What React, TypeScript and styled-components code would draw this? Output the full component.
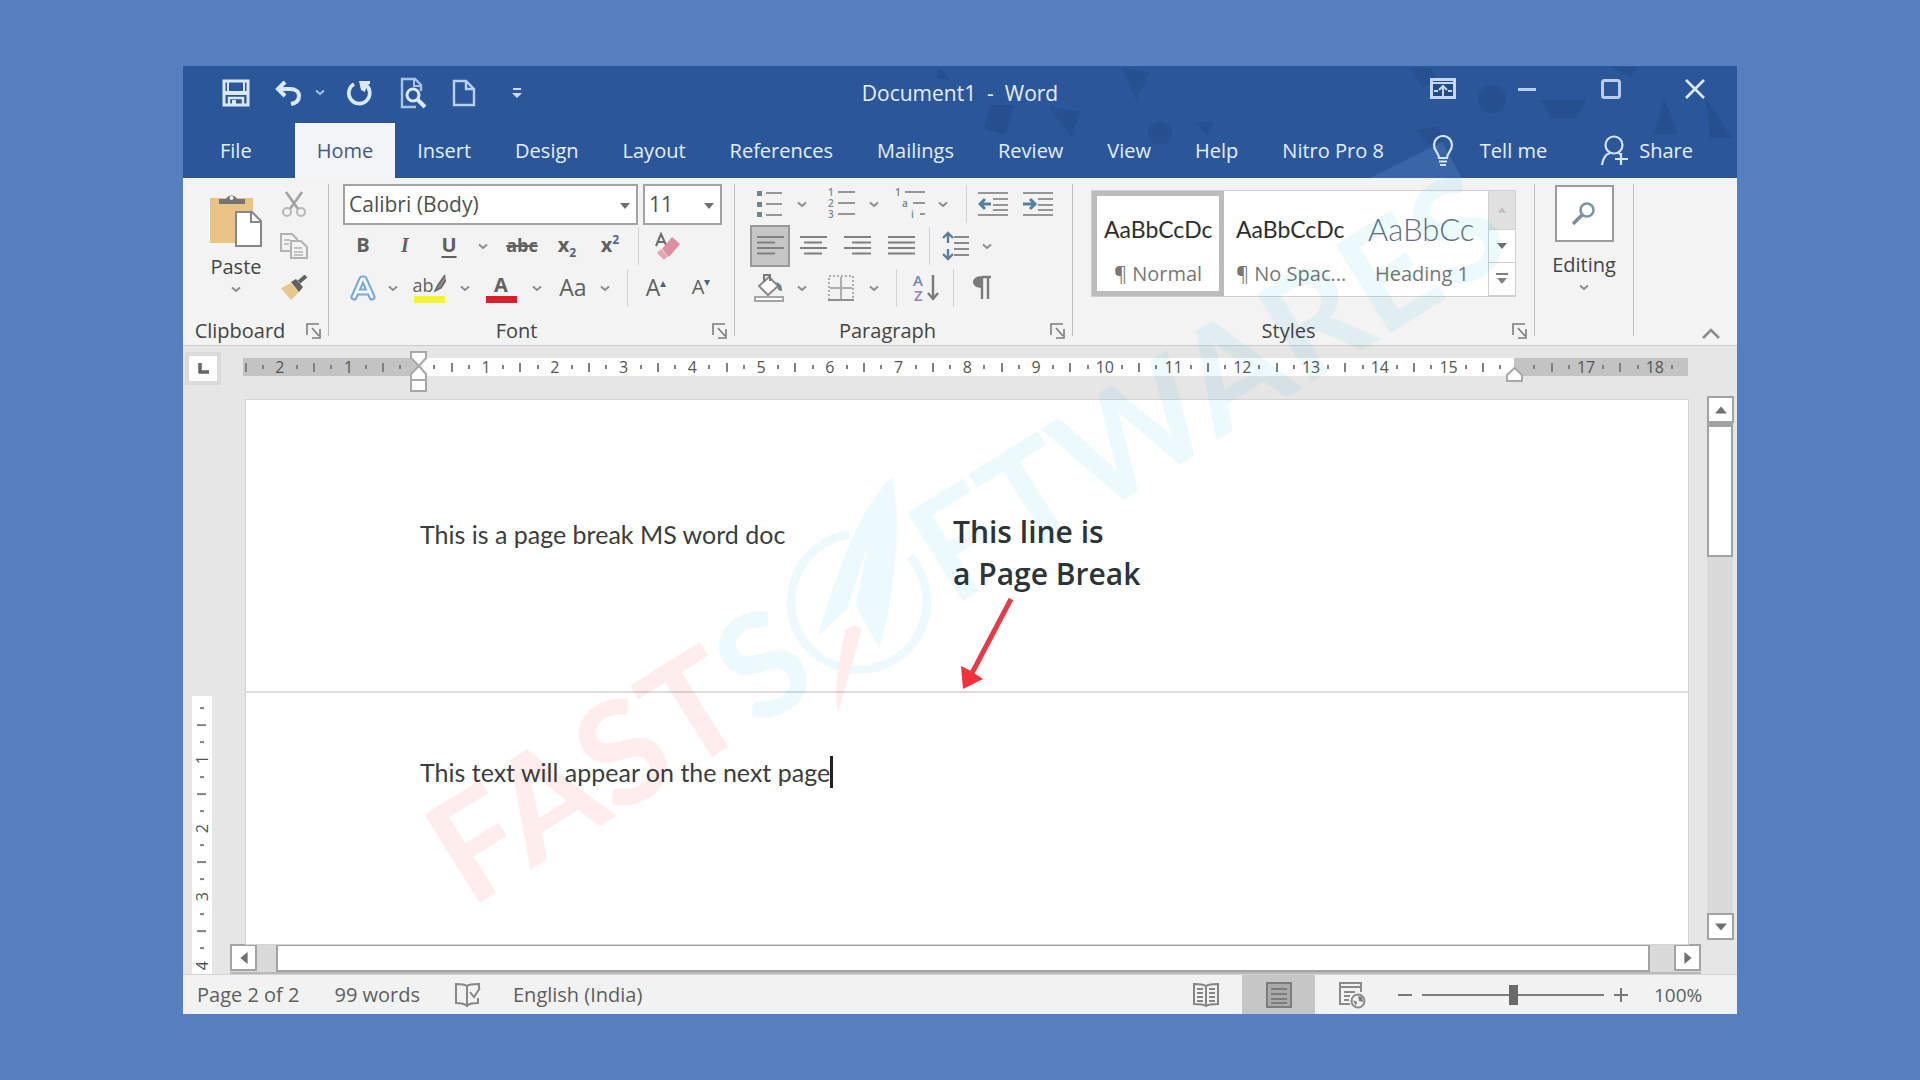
import React from 'react';
import styled, { createGlobalStyle, css } from 'styled-components';

const UI_FONT = '"Open Sans", "Noto Sans", sans-serif';
const DOC_FONT = 'Lato, "Open Sans", sans-serif';

const GlobalStyle = createGlobalStyle`
  * { box-sizing: border-box; }
  body { margin: 0; background: #557fbe; font-family: ${UI_FONT}; color: #444; }
  button, select, input { font: inherit; color: inherit; }
  svg { display: block; flex: none; }
`;

/* ---------- shell ---------- */

const Desktop = styled.div`
  min-height: 100vh;
  padding: 66px 183px;
  display: flex;
`;

const AppWindow = styled.div`
  position: relative;
  flex: 1;
  min-width: 0;
  display: flex;
  flex-direction: column;
  overflow: hidden;
  background: #e6e6e6;
  font-size: 20px;
`;

const Header = styled.header`
  position: relative;
  background: #2b579a;
  color: #e4eefb;
`;

const HeaderArt = styled.svg`
  position: absolute;
  right: 0;
  top: 0;
`;

const TitleBar = styled.div`
  position: relative;
  height: 57px;
  padding-bottom: 4px;
  display: grid;
  grid-template-columns: 1fr auto 1fr;
`;

const QuickAccess = styled.div`
  display: flex;
  align-items: center;
  padding-left: 27px;
`;

const Title = styled.h1`
  margin: 0;
  align-self: center;
  font-size: 21px;
  line-height: 28px;
  font-weight: 400;
  white-space: pre;
`;

const WindowControls = styled.div`
  display: flex;
  justify-content: flex-end;
  height: 46px;
`;

const IconButton = styled.button<{ $w: number; $active?: boolean }>`
  width: ${p => p.$w}px;
  height: 100%;
  flex: none;
  padding: 0;
  border: ${p => (p.$active ? '2px solid #9a9a9a' : '0')};
  background: ${p => (p.$active ? '#c6c6c6' : 'transparent')};
  display: flex;
  align-items: center;
  justify-content: center;
  white-space: nowrap;
`;

const TabBar = styled.nav`
  position: relative;
  height: 55px;
  display: flex;
  padding-left: 15px;
`;

const Tab = styled.button<{ $active?: boolean; $first?: boolean }>`
  border: 0;
  padding: 0 22px;
  margin-right: ${p => (p.$first ? 21 : 0)}px;
  display: flex;
  align-items: center;
  gap: 10px;
  white-space: nowrap;
  background: ${p => (p.$active ? '#f3f5f8' : 'transparent')};
  color: ${p => (p.$active ? '#42597f' : 'inherit')};
`;

const TellMe = styled(Tab)`
  gap: 26px;
  padding-left: 26px;
`;

const ShareTab = styled(Tab)`
  margin-left: auto;
  padding-right: 44px;
`;

/* ---------- ribbon ---------- */

const Ribbon = styled.div`
  height: 168px;
  display: flex;
  background: #f3f3f3;
  border-bottom: 1px solid #cdcdcd;
`;

const Group = styled.section<{ $w: number }>`
  position: relative;
  width: ${p => p.$w}px;
  flex: none;
  display: flex;
  flex-direction: column;
  padding-top: 5px;
`;

const GroupBody = styled.div<{ $pad?: number }>`
  height: 128px;
  padding-left: ${p => p.$pad ?? 0}px;
`;

const GroupLabel = styled.div<{ $shift?: number }>`
  display: flex;
  justify-content: center;
  align-items: center;
  height: 28px;
  margin-top: 7px;
  padding-right: ${p => p.$shift ?? 0}px;
  line-height: 28px;
`;

const Launcher = styled.button`
  position: absolute;
  right: 6px;
  bottom: 4px;
  width: 16px;
  height: 20px;
  padding: 0;
  border: 0;
  background: none;
`;

const Separator = styled.div`
  width: 1px;
  flex: none;
  margin: 6px 0 9px;
  background: #bdbdbd;
`;

const Row = styled.div`
  height: 42px;
  display: flex;
  align-items: center;
`;

const MiniSep = styled.div<{ $ml?: number }>`
  width: 1px;
  height: 38px;
  flex: none;
  margin-left: ${p => p.$ml ?? 0}px;
  background: #d4d4d4;
`;

const ClipboardBody = styled(GroupBody)`
  display: grid;
  grid-template-columns: 74px 60px;
`;

const BigButton = styled.button`
  border: 0;
  padding: 0;
  background: none;
  display: flex;
  flex-direction: column;
  align-items: center;
  line-height: 28px;
  gap: 5px;
`;

const PasteButton = styled(BigButton)`
  padding-top: 9px;
`;

const EditingButton = styled(BigButton)`
  width: 100%;
  padding-top: 2px;
`;

const FindBox = styled.span`
  width: 59px;
  height: 57px;
  border: 2px solid #9b9b9b;
  background: #fff;
  display: flex;
  align-items: center;
  justify-content: center;
  margin-bottom: 4px;
`;

const Combo = styled.label<{ $w: number }>`
  position: relative;
  width: ${p => p.$w}px;
  height: 41px;
  margin-right: 5px;
  svg { position: absolute; right: 8px; top: 17px; pointer-events: none; }
`;

const ComboSelect = styled.select`
  appearance: none;
  width: 100%;
  height: 100%;
  padding: 0 24px 0 4px;
  border: 2px solid #a3a3a3;
  border-radius: 0;
  background: #fff;
  color: #505050;
  font-size: 21px;
`;

const Glyph = styled.span<{ $serif?: boolean; $bold?: boolean; $italic?: boolean; $line?: 'underline' | 'line-through' }>`
  font-family: ${p => (p.$serif ? '"Liberation Serif", serif' : UI_FONT)};
  font-weight: ${p => (p.$bold ? 700 : 400)};
  font-style: ${p => (p.$italic ? 'italic' : 'normal')};
  text-decoration: ${p => p.$line ?? 'none'};
  text-decoration-thickness: 2px;
  text-underline-offset: 4px;
  color: #606060;
  line-height: 24px;
  padding-bottom: 3px;
  sub, sup { font-size: 12px; line-height: 0; color: #4b6484; }
`;

const SmallGlyph = styled(Glyph)`
  font-size: 18px;
`;

const LargeGlyph = styled(Glyph)`
  font-size: 23px;
`;

const Gallery = styled.div`
  display: flex;
  height: 107px;
  width: 425px;
  background: #fff;
  border: 1px solid #d0d0d0;
`;

const GalleryBody = styled(GroupBody)`
  padding-top: 7px;
`;

const StyleCard = styled.button<{ $active?: boolean }>`
  flex: 1;
  min-width: 0;
  padding: ${p => (p.$active ? '17px 7px 0' : '22px 12px 0')};
  border: ${p => (p.$active ? '5px solid #bcbcbc' : '0')};
  background: transparent;
  display: flex;
  flex-direction: column;
  align-items: stretch;
  gap: 16px;
  text-align: center;
`;

const Sample = styled.span<{ $heading?: boolean }>`
  overflow: hidden;
  white-space: nowrap;
  text-align: left;
  height: 32px;
  line-height: 32px;
  font-family: ${DOC_FONT};
  font-size: ${p => (p.$heading ? 31 : 23)}px;
  font-weight: ${p => (p.$heading ? 300 : 400)};
  color: ${p => (p.$heading ? '#5c7087' : '#2e2e2e')};
`;

const StyleName = styled.span`
  white-space: nowrap;
  line-height: 26px;
  color: #777;
`;

const GalleryScroll = styled.div`
  width: 27px;
  display: grid;
  grid-template-rows: 39px 1fr 1fr;
  border-left: 1px solid #d0d0d0;
`;

const ScrollStep = styled.button<{ $off?: boolean }>`
  border: 0;
  border-bottom: 1px solid #d0d0d0;
  padding: 0;
  background: ${p => (p.$off ? '#e1e1e1' : '#fff')};
  display: grid;
  place-items: center;
`;

const Collapse = styled.button`
  margin-left: auto;
  align-self: flex-end;
  width: 52px;
  height: 24px;
  border: 0;
  padding: 0;
  background: none;
  display: grid;
  place-items: center;
`;

/* ---------- workspace ---------- */

const Workspace = styled.main`
  flex: 1;
  display: flex;
`;

const Canvas = styled.div`
  flex: 1;
  min-width: 0;
  display: flex;
  flex-direction: column;
`;

const RulerRow = styled.div`
  position: relative;
  height: 54px;
  display: flex;
  align-items: flex-start;
  padding: 6px 19px 0 2px;
`;

const TabStop = styled.button`
  width: 36px;
  height: 33px;
  padding: 0;
  border: 4px solid #dadada;
  background: #fff;
  display: grid;
  place-items: center;
`;

const Ruler = styled.div`
  position: relative;
  flex: 1;
  height: 18px;
  margin: 6px 0 0 22px;
  padding-right: 7px;
  display: flex;
  align-items: center;
  font-size: 16px;
  line-height: 18px;
  color: #555;
  background: linear-gradient(90deg, #c3c3c3 176px, #fff 176px, #fff calc(100% - 174px), #c3c3c3 calc(100% - 174px));
`;

const Cell = styled.span`
  flex: 1;
  min-width: 0;
  display: flex;
  align-items: center;
  justify-content: center;
`;

const FirstCell = styled.span`
  width: 11px;
  padding-left: 2px;
`;

const Mark = styled.i<{ $long?: boolean }>`
  display: block;
  width: 2px;
  height: ${p => (p.$long ? 9 : 4)}px;
  background: #808080;
`;

const IndentMarker = styled.svg<{ $side: 'left' | 'right' }>`
  position: absolute;
  ${p => (p.$side === 'left' ? css`left: 167px; top: -7px;` : css`right: 165px; top: 9px;`)}
`;

const DocRow = styled.div`
  flex: 1;
  display: flex;
`;

const VRulerTrack = styled.div`
  width: 47px;
  flex: none;
  padding: 296px 18px 0 9px;
  display: flex;
`;

const VRuler = styled.div`
  flex: 1;
  display: flex;
  flex-direction: column;
  background: #fff;
  padding: 4px 0 0;
  font-size: 16px;
  line-height: 18px;
  color: #555;
  ${Cell} { writing-mode: vertical-rl; transform: rotate(180deg); }
  ${Mark} { width: 4px; height: 2px; }
  ${Cell}:nth-child(4n + 2) ${Mark} { width: 9px; }
`;

const DocColumn = styled.div`
  flex: 1;
  min-width: 0;
  display: flex;
  flex-direction: column;
`;

const Pages = styled.div`
  position: relative;
  flex: 1;
  margin: 0 19px 0 16px;
  background: #fff;
  box-shadow: 0 0 0 1px #d4d4d4;
  font-family: ${DOC_FONT};
  font-size: 25px;
  line-height: 34px;
  color: #3c3c3c;
`;

const PageSheet = styled.article<{ $first?: boolean }>`
  height: ${p => (p.$first ? 293 : 249)}px;
  padding: ${p => (p.$first ? 117 : 62)}px 174px 0;
  border-bottom: ${p => (p.$first ? '2px solid #dcdcdc' : '0')};
`;

const Paragraph = styled.p`
  margin: 0;
  display: flex;
  align-items: center;
`;

const Caret = styled.span`
  width: 3px;
  height: 32px;
  background: #222;
`;

const Callout = styled.div`
  position: absolute;
  left: 707px;
  top: 111px;
  font-family: ${UI_FONT};
  font-size: 30px;
  font-weight: 600;
  line-height: 42px;
  color: #2c3438;
  svg { margin: 3px 0 0 4px; }
`;

const HScroll = styled.div`
  height: 30px;
  display: flex;
  margin-right: 6px;
  background: #dadada;
  border-bottom: 2px solid #b9b9b9;
`;

const ScrollButton = styled.button`
  width: 27px;
  height: 27px;
  flex: none;
  border: 2px solid #a3a3a3;
  background: #fff;
  padding: 0;
  display: grid;
  place-items: center;
`;

const HThumb = styled.div`
  flex: 1;
  margin: 0 24px 0 19px;
  height: 28px;
  border: 2px solid #a3a3a3;
  background: #fff;
`;

const VScroll = styled.div`
  width: 26px;
  margin: 50px 4px 34px 0;
  display: flex;
  flex-direction: column;
  background: #dadada;
`;

const VThumb = styled.div`
  height: 134px;
  margin-bottom: auto;
  border: 2px solid #a3a3a3;
  border-top-width: 4px;
  background: #fff;
`;

const StatusBar = styled.footer`
  height: 40px;
  display: flex;
  align-items: center;
  background: #f2f2f2;
  border-top: 1px solid #d2d2d2;
  padding: 0 35px 0 14px;
  color: #5e5e5e;
`;

const StatusItem = styled.span<{ $gap: number }>`
  margin-right: ${p => p.$gap}px;
  white-space: nowrap;
`;

const ViewButtons = styled.div`
  margin-left: auto;
  height: 100%;
  display: flex;
`;

const ViewButton = styled.button<{ $active?: boolean }>`
  width: 73px;
  height: 100%;
  border: 0;
  padding: 0;
  display: grid;
  place-items: center;
  background: ${p => (p.$active ? '#c6c6c6' : 'transparent')};
`;

const ZoomButton = styled.button`
  width: 34px;
  height: 100%;
  border: 0;
  padding: 0;
  background: none;
  display: grid;
  place-items: center;
`;

const ZoomSlider = styled.input`
  appearance: none;
  width: 182px;
  height: 24px;
  margin: 0;
  background: linear-gradient(#7d7d7d, #7d7d7d) center / 100% 2px no-repeat;
  &::-webkit-slider-thumb { appearance: none; width: 9px; height: 20px; background: #6a6a6a; }
`;

const ZoomValue = styled.span`
  font-size: 19px;
  width: 48px;
  margin-left: 16px;
`;

const Watermark = styled.div`
  position: absolute;
  left: 285px;
  top: 840px;
  height: 0;
  display: flex;
  align-items: flex-end;
  transform: rotate(-32deg);
  transform-origin: 0 100%;
  font-family: Lato, sans-serif;
  font-size: 144px;
  font-weight: 700;
  line-height: 104px;
  pointer-events: none;
  mix-blend-mode: multiply;
`;

const WatermarkText = styled.span<{ $tone: 'red' | 'blue' }>`
  color: ${p => (p.$tone === 'red' ? '#ffeded' : '#edfafd')};
`;

/* ---------- icons ---------- */

const Chevron = ({ c = '#8c8c8c' }: { c?: string }) => (
  <svg width="10" height="7" viewBox="0 0 10 7"><path d="M1 1.5l4 3.5 4-3.5" fill="none" stroke={c} strokeWidth="2" /></svg>
);
const Arrow = ({ dir = 'down', s = 10, c = '#707070' }: { dir?: 'up' | 'down' | 'left' | 'right'; s?: number; c?: string }) => {
  const turn = { down: 0, left: 90, up: 180, right: 270 }[dir];
  return <svg width={s} height={s} viewBox="0 0 10 10"><path d="M0 2h10L5 8z" fill={c} transform={`rotate(${turn} 5 5)`} /></svg>;
};
const LauncherIcon = () => (
  <svg width="16" height="18" viewBox="0 0 16 18"><path d="M1 13V2h12M6 6l7 8M14 7v9H6" fill="none" stroke="#7c7c7c" strokeWidth="1.6" /></svg>
);
const SaveIcon = () => (
  <svg width="28" height="28" viewBox="0 0 28 28"><path d="M2 2h24v24H2z" fill="none" stroke="#dbe8fb" strokeWidth="3" /><path d="M6 2v10M22 2v10" stroke="#dbe8fb" strokeWidth="2" /><path d="M3 12h22v4H3z" fill="#dbe8fb" /><path d="M7 26v-7h14v7" fill="none" stroke="#dbe8fb" strokeWidth="2.4" /><path d="M10 21h4v5h-4z" fill="#dbe8fb" /></svg>
);
const UndoIcon = () => (
  <svg width="28" height="26" viewBox="0 0 28 26"><path d="M11 2L4 9l7 7M4 9h12c6 0 9 3 9 7s-3 7-8 8" fill="none" stroke="#dbe8fb" strokeWidth="4" /></svg>
);
const RedoIcon = () => (
  <svg width="28" height="28" viewBox="0 0 28 28"><path d="M9 5a10.500 10.500 0 1 0 12 1" fill="none" stroke="#dbe8fb" strokeWidth="3.600" /><path d="M14 2h11v3l-3 1-2 7-4-2z" fill="#dbe8fb" /></svg>
);
const PreviewIcon = () => (
  <svg width="30" height="32" viewBox="0 0 30 32"><path d="M17 30H3V2h13l6 6v6" fill="none" stroke="#a9c3e6" strokeWidth="2.4" /><path d="M15 2v7h7" fill="none" stroke="#a9c3e6" strokeWidth="2" /><circle cx="14" cy="18" r="6" fill="#2b579a" stroke="#dbe8fb" strokeWidth="3" /><path d="M18 22l8 8" stroke="#dbe8fb" strokeWidth="4" /></svg>
);
const NewIcon = () => (
  <svg width="24" height="28" viewBox="0 0 24 28"><path d="M2 2h12l8 8v16H2z M14 2v8h8" fill="none" stroke="#b9cfee" strokeWidth="2.4" /></svg>
);
const CustomizeIcon = () => (
  <svg width="12" height="12" viewBox="0 0 12 12"><path d="M2 1h8v2H2z M1 6h10l-5 5z" fill="#c8daf4" /></svg>
);
const RibbonOptionsIcon = () => (
  <svg width="26" height="22" viewBox="0 0 26 22"><path d="M1.500 1.500h23v18h-23z" fill="#244a85" stroke="#c6d8f0" strokeWidth="3" /><path d="M2 5h22" stroke="#c6d8f0" strokeWidth="2" /><path d="M13 18v-9M9 12l4-4 4 4M4 13h4M18 13h4" fill="none" stroke="#c6d8f0" strokeWidth="2" /></svg>
);
const BulbIcon = () => (
  <svg width="22" height="32" viewBox="0 0 22 32"><path d="M7 23c0-5-5-7-5-13a9 9 0 0 1 18 0c0 6-5 8-5 13zM7 26.500h8M8 30h6" fill="none" stroke="#d6e3f6" strokeWidth="2.200" /></svg>
);
const ShareIcon = () => (
  <svg width="29" height="32" viewBox="0 0 29 32"><circle cx="14" cy="10" r="8.500" fill="none" stroke="#d6e3f6" strokeWidth="2.200" /><path d="M2 30c1-7 4-11 8-12M18 17l3 3M21 18v12M15 24h13" fill="none" stroke="#d6e3f6" strokeWidth="2.200" /></svg>
);
const PasteIcon = () => (
  <svg width="54" height="56" viewBox="0 0 54 56"><path d="M1 6h43v45H1z" fill="#e9c383" /><path d="M10 12V7h7a6 6 0 0 1 11 0h8v5z" fill="#747474" /><circle cx="22.500" cy="6" r="2" fill="#f3f3f3" /><path d="M27 20h16l9 9v25H27z" fill="#fff" stroke="#878787" strokeWidth="2" /><path d="M42 20v10h10" fill="none" stroke="#878787" strokeWidth="2" /></svg>
);
const CutIcon = () => (
  <svg width="28" height="28" viewBox="0 0 28 28"><path d="M6 2l12 17M22 2L10 19" stroke="#a2a2a2" strokeWidth="2.600" /><circle cx="7" cy="22" r="4" fill="none" stroke="#b8b8b8" strokeWidth="2" /><circle cx="21" cy="22" r="4" fill="none" stroke="#b8b8b8" strokeWidth="2" /></svg>
);
const CopyIcon = () => (
  <svg width="28" height="28" viewBox="0 0 28 28"><g fill="#f3f3f3" stroke="#b3b3b3" strokeWidth="2"><path d="M1 2h11l5 5v12H1z" /><path d="M11 9h10l6 6v11H11z" /></g><path d="M4 8h6M4 12h5M14 16h8M14 20h9M14 23h9" stroke="#b3b3b3" strokeWidth="1.500" /></svg>
);
const PainterIcon = () => (
  <svg width="28" height="26" viewBox="0 0 28 26"><path d="M1 13l10-5 8 9-8 8z" fill="#e8c68c" /><path d="M11 7l5-3 7 8-4 5z" fill="#606060" /><path d="M19 7l7-6" stroke="#606060" strokeWidth="4" /></svg>
);
const EraserIcon = () => (
  <svg width="28" height="28" viewBox="0 0 28 28"><path d="M3 14L8 2l5 11M5 10h6" fill="none" stroke="#6d6d6d" strokeWidth="2" /><path d="M9 17L19 5l8 7-11 13z" fill="#dc8fa0" /><path d="M4 21l4-4 7 7-4 4z" fill="#e3a5b2" /></svg>
);
const TextEffectsIcon = () => (
  <svg width="26" height="26" viewBox="0 0 26 26"><path d="M4 22L12 4h2l8 18M8 17h10" fill="none" stroke="#7ca7d3" strokeWidth="7" strokeLinejoin="round" strokeLinecap="round" /><path d="M4 22L12 4h2l8 18M8 17h10" fill="none" stroke="#f2f7fd" strokeWidth="3" strokeLinejoin="round" strokeLinecap="round" /></svg>
);
const Swatched = styled.span<{ $c: string }>`
  width: 31px;
  height: 30px;
  display: flex;
  justify-content: center;
  border-bottom: 7px solid ${p => p.$c};
  line-height: 22px;
`;
const PenIcon = () => (
  <svg width="12" height="20" viewBox="0 0 12 20"><path d="M11 2L4 12l-3 6 6-3 5-8" fill="#8a8a8a" stroke="#666" strokeWidth="1.500" /></svg>
);

const ListLines = ({ ys, x1, x2 }: { ys: number[]; x1: number; x2: number }) => (
  <path d={ys.map(y => `M${x1} ${y}H${x2}`).join('')} stroke="#969696" strokeWidth="2" />
);
const BulletsIcon = () => (
  <svg width="26" height="28" viewBox="0 0 26 28"><ListLines ys={[3, 14, 25]} x1={10} x2={26} /><path d="M1 1h5v5H1zM1 12h5v5H1zM1 22h5v5H1z" fill="#6f8491" /></svg>
);
const IconText = styled.text`
  font-family: ${UI_FONT};
  font-weight: 600;
`;
const NumberingIcon = () => (
  <svg width="28" height="34" viewBox="0 0 28 34" overflow="visible"><ListLines ys={[5, 16, 27]} x1={11} x2={28} />
    <g fill="#7c8790" fontSize="10"><IconText x="1" y="9">1</IconText><IconText x="1" y="20">2</IconText><IconText x="1" y="31">3</IconText></g></svg>
);
const MultilevelIcon = () => (
  <svg width="32" height="34" viewBox="0 0 32 34" overflow="visible"><path d="M11 5h20M19 16h12M26 27h5" stroke="#969696" strokeWidth="2" />
    <g fill="#6f8294" fontSize="10"><IconText x="1" y="9">1</IconText><IconText x="8" y="20">a</IconText><IconText x="17" y="31">i</IconText></g></svg>
);
const IndentIcon = ({ out }: { out?: boolean }) => (
  <svg width="30" height="28" viewBox="0 0 30 28"><path d="M0 3h30M15 9h15M15 15h15M15 20h15M0 25h30" stroke="#969696" strokeWidth="2" />
    <path d={out ? 'M13 14H3M7 9l-5 5 5 5' : 'M0 14h10M7 9l5 5-5 5'} fill="none" stroke="#56809f" strokeWidth="3" /></svg>
);
const AlignIcon = ({ rows }: { rows: [number, number][] }) => (
  <svg width="27" height="22" viewBox="0 0 27 22"><path d={rows.map(([a, b], i) => `M${a} ${2 + i * 5.5}H${b}`).join('')} stroke="#808080" strokeWidth="2" /></svg>
);
const SpacingIcon = () => (
  <svg width="28" height="30" viewBox="0 0 28 30"><path d="M12 6h15M12 12h15M12 18h15M12 24h15" stroke="#8a8a8a" strokeWidth="2" /><path d="M6 3v9M6 18v9M1 7l5-5 5 5M1 23l5 5 5-5" fill="none" stroke="#5f7e98" strokeWidth="2.400" /></svg>
);
const BucketIcon = () => (
  <svg width="32" height="30" viewBox="0 0 32 30"><path d="M6 13L16 4l9 9-10 9z" fill="#fff" stroke="#8a8a8a" strokeWidth="2" /><path d="M11 9V2h6v6" fill="none" stroke="#7a7a7a" strokeWidth="2" /><path d="M23 9c6 2 6 5 6 9-4 0-5-3-4-5z" fill="#6d8190" /><path d="M2 24h28v4H2z" fill="#fff" stroke="#a5a5a5" strokeWidth="2" /></svg>
);
const BordersIcon = () => (
  <svg width="26" height="26" viewBox="0 0 26 26"><path d="M1 1h24v24H1z" fill="none" stroke="#adadad" strokeWidth="2" strokeDasharray="2 2" /><path d="M13 2v22M2 13h22" stroke="#adadad" strokeWidth="2" /><path d="M0 25h26" stroke="#8f8f8f" strokeWidth="2" /></svg>
);
const SortIcon = () => (
  <svg width="27" height="32" viewBox="0 0 27 32" overflow="visible"><g fontSize="15"><IconText x="1" y="14" fill="#7585ae">A</IconText><IconText x="2" y="29" fill="#9480b0">Z</IconText></g><path d="M21 3v23M16 21l5 6 5-6" fill="none" stroke="#7a7a7a" strokeWidth="2.400" /></svg>
);
const PilcrowIcon = () => (
  <svg width="20" height="26" viewBox="0 0 20 26"><path d="M10 2H19M10 2v22M16 2v22" stroke="#7a7a7a" strokeWidth="2.400" /><path d="M10 1v12C4 13 1 10 1 7s3-6 9-6z" fill="#7a7a7a" /></svg>
);
const SearchIcon = () => (
  <svg width="26" height="26" viewBox="0 0 26 26"><circle cx="16" cy="9" r="6.500" fill="none" stroke="#7d94a2" strokeWidth="2.600" /><path d="M11 14L2 23" stroke="#7d8e99" strokeWidth="3.600" /></svg>
);
const ProofIcon = () => (
  <svg width="28" height="26" viewBox="0 0 28 26"><path d="M13 4C10 2 6 2 2 2v19c4 0 8 0 11 3 2-3 6-3 11-3v-5M13 4v19M13 4c2-2 6-2 12-2v5M16 10l4 5 6-9" fill="none" stroke="#878787" strokeWidth="2" /></svg>
);
const ReadIcon = () => (
  <svg width="26" height="26" viewBox="0 0 26 26"><path d="M13 4C10 2 5 2 1 2v20c4 0 9 0 12 2 3-2 8-2 12-2V2c-4 0-9 0-12 2zv20" fill="none" stroke="#858585" strokeWidth="2" /><path d="M4 7h6M4 11h6M4 15h6M4 19h6M16 7h6M16 11h6M16 15h6M16 19h6" stroke="#858585" strokeWidth="2" /></svg>
);
const PrintIcon = () => (
  <svg width="28" height="28" viewBox="0 0 28 28"><path d="M2 2h24v24H2z" fill="#aaa" stroke="#7c7c7c" strokeWidth="2" /><path d="M6 8h16M6 13h16M6 18h16M6 22h16" stroke="#7c7c7c" strokeWidth="2" /></svg>
);
const WebIcon = () => (
  <svg width="28" height="28" viewBox="0 0 28 28"><path d="M12 23H2V2h21v9M2 6h21M6 11h11M6 15h6M6 19h5" fill="none" stroke="#8a8a8a" strokeWidth="2" /><circle cx="20" cy="20" r="6.500" fill="#f2f2f2" stroke="#8a8a8a" strokeWidth="2" /><path d="M20 15l4 1 1 5-4-1zM15 19l4 2-1 4z" fill="#7c7c7c" /></svg>
);
const RocketIcon = () => (
  <svg width="152" height="104" viewBox="0 0 152 104" overflow="visible">
    <g transform="translate(76 54) rotate(32)">
      <path d="M-10 -68A68 68 0 1 0 50 -46" fill="none" stroke="#edfafd" strokeWidth="9" />
      <path d="M33 -126C8 -102 -12 -66 -42 34L-12 6L8 -56L-4 4L20 46C32 0 44 -66 33 -126z" fill="#edfafd" />
      <path d="M-14 28C-8 22 0 22 2 28L-22 112C-26 84 -20 54 -14 28z" fill="#ffeded" />
    </g>
  </svg>
);

/* ---------- ruler ---------- */

const ticks = (from: number, count: number) => Array.from({ length: count }, (_, i) => from + i * 0.25);

const RulerMark = ({ v }: { v: number }) => {
  if (v === 0 || v === 16) return null;
  if (Number.isInteger(v)) return <>{Math.abs(v)}</>;
  return <Mark $long={Math.abs(v % 1) === 0.5} />;
};

const TABS = ['File', 'Home', 'Insert', 'Design', 'Layout', 'References', 'Mailings', 'Review', 'View', 'Help', 'Nitro Pro 8'];

const Drop = ({ w, label }: { w: number; label: string }) => (
  <IconButton $w={w} aria-label={label}><Chevron /></IconButton>
);

export default function App() {
  return (
    <Desktop>
      <GlobalStyle />
      <AppWindow>
        <Header>
          <HeaderArt width="800" height="112" viewBox="937 66 800 112">
            <g fill="#214883" opacity=".45">
              <path d="M932 78l8-10 10 12zM990 105h24l-8 30-22-6zM1048 106l32 6-8 26zM1122 67l28 6-14 27zM1195 122h20l-8 14zM1412 68h18l8 12-16 8zM1416 130l22-4 6 16-16 2zM1540 100h46l-10 18h-24zM1612 67h26l-8 10zM1664 98l14 36h-24zM1706 98l26 40h-22z" />
              <circle cx="1160" cy="133" r="12" /><circle cx="1492" cy="99" r="14" />
            </g>
            <path d="M1370 178l72-36 20 36z" fill="#4a74b4" opacity=".5" />
          </HeaderArt>
          <TitleBar>
            <QuickAccess>
              <IconButton $w={52} aria-label="Save"><SaveIcon /></IconButton>
              <IconButton $w={52} aria-label="Undo"><UndoIcon /></IconButton>
              <IconButton $w={12} aria-label="Undo list"><Chevron c="#a9c0e2" /></IconButton>
              <IconButton $w={66} aria-label="Redo"><RedoIcon /></IconButton>
              <IconButton $w={44} aria-label="Print preview"><PreviewIcon /></IconButton>
              <IconButton $w={56} aria-label="New"><NewIcon /></IconButton>
              <IconButton $w={50} aria-label="Customize"><CustomizeIcon /></IconButton>
            </QuickAccess>
            <Title>{'Document1  -  Word'}</Title>
            <WindowControls>
              <IconButton $w={84} aria-label="Ribbon display options"><RibbonOptionsIcon /></IconButton>
              <IconButton $w={84} aria-label="Minimize"><svg width="18" height="3"><path d="M0 0h18v3H0z" fill="#b9cdea" /></svg></IconButton>
              <IconButton $w={84} aria-label="Maximize"><svg width="20" height="20"><rect x="1.5" y="1.5" width="17" height="17" rx="2" fill="none" stroke="#b9cdea" strokeWidth="3" /></svg></IconButton>
              <IconButton $w={84} aria-label="Close"><svg width="20" height="20"><path d="M1 1l18 18M19 1L1 19" stroke="#dce8f8" strokeWidth="2.600" /></svg></IconButton>
            </WindowControls>
          </TitleBar>
          <TabBar>
            {TABS.map(t => <Tab key={t} $active={t === 'Home'} $first={t === 'File'}>{t}</Tab>)}
            <TellMe><BulbIcon />Tell me</TellMe>
            <ShareTab><ShareIcon />Share</ShareTab>
          </TabBar>
        </Header>

        <Ribbon>
          <Group $w={145}>
            <ClipboardBody $pad={16}>
              <PasteButton><PasteIcon /><span>Paste</span><Chevron /></PasteButton>
              <div>
                <Row><IconButton $w={42} aria-label="Cut"><CutIcon /></IconButton></Row>
                <Row><IconButton $w={42} aria-label="Copy"><CopyIcon /></IconButton></Row>
                <Row><IconButton $w={42} aria-label="Format painter"><PainterIcon /></IconButton></Row>
              </div>
            </ClipboardBody>
            <GroupLabel $shift={31}>Clipboard</GroupLabel>
            <Launcher aria-label="Clipboard options"><LauncherIcon /></Launcher>
          </Group>
          <Separator />
          <Group $w={405}>
            <GroupBody $pad={14}>
              <Row>
                <Combo $w={295}><ComboSelect aria-label="Font"><option>Calibri (Body)</option></ComboSelect><Arrow s={10} /></Combo>
                <Combo $w={79}><ComboSelect aria-label="Font size"><option>11</option></ComboSelect><Arrow s={10} /></Combo>
              </Row>
              <Row>
                <IconButton $w={40} aria-label="Bold"><Glyph $bold>B</Glyph></IconButton>
                <IconButton $w={44} aria-label="Italic"><Glyph $serif $bold $italic>I</Glyph></IconButton>
                <IconButton $w={44} aria-label="Underline"><Glyph $bold $line="underline">U</Glyph></IconButton>
                <Drop w={24} label="Underline style" />
                <IconButton $w={54} aria-label="Strikethrough"><SmallGlyph $bold $line="line-through">abc</SmallGlyph></IconButton>
                <IconButton $w={36} aria-label="Subscript"><Glyph $bold>x<sub>2</sub></Glyph></IconButton>
                <IconButton $w={50} aria-label="Superscript"><Glyph $bold>x<sup>2</sup></Glyph></IconButton>
                <MiniSep $ml={3} />
                <IconButton $w={56} aria-label="Clear formatting"><EraserIcon /></IconButton>
              </Row>
              <Row>
                <IconButton $w={40} aria-label="Text effects"><TextEffectsIcon /></IconButton>
                <Drop w={20} label="Text effect list" />
                <IconButton $w={52} aria-label="Highlight"><Swatched $c="#f4f433"><SmallGlyph>ab</SmallGlyph><PenIcon /></Swatched></IconButton>
                <Drop w={20} label="Highlight colours" />
                <IconButton $w={52} aria-label="Font colour"><Swatched $c="#d8202c"><Glyph $bold>A</Glyph></Swatched></IconButton>
                <Drop w={20} label="Font colours" />
                <IconButton $w={52} aria-label="Change case"><LargeGlyph>Aa</LargeGlyph></IconButton>
                <Drop w={12} label="Case list" />
                <MiniSep $ml={16} />
                <IconButton $w={56} aria-label="Grow font"><LargeGlyph>A<sup>▴</sup></LargeGlyph></IconButton>
                <IconButton $w={34} aria-label="Shrink font"><Glyph>A<sup>▾</sup></Glyph></IconButton>
              </Row>
            </GroupBody>
            <GroupLabel $shift={30}>Font</GroupLabel>
            <Launcher aria-label="Font options"><LauncherIcon /></Launcher>
          </Group>
          <Separator />
          <Group $w={337}>
            <GroupBody $pad={15}>
              <Row>
                <IconButton $w={38} aria-label="Bullets"><BulletsIcon /></IconButton>
                <Drop w={28} label="Bullet list" />
                <IconButton $w={50} aria-label="Numbering"><NumberingIcon /></IconButton>
                <Drop w={16} label="Number list" />
                <IconButton $w={56} aria-label="Multilevel list"><MultilevelIcon /></IconButton>
                <Drop w={10} label="Level list" />
                <MiniSep $ml={18} />
                <IconButton $w={52} aria-label="Decrease indent"><IndentIcon out /></IconButton>
                <IconButton $w={38} aria-label="Increase indent"><IndentIcon /></IconButton>
              </Row>
              <Row>
                <IconButton $w={40} $active aria-label="Align left"><AlignIcon rows={[[0, 27], [0, 18], [0, 27], [0, 18]]} /></IconButton>
                <IconButton $w={46} aria-label="Center"><AlignIcon rows={[[0, 27], [4, 22], [0, 27], [4, 22]]} /></IconButton>
                <IconButton $w={42} aria-label="Align right"><AlignIcon rows={[[0, 27], [8, 27], [0, 27], [8, 27]]} /></IconButton>
                <IconButton $w={46} aria-label="Justify"><AlignIcon rows={[[0, 27], [0, 27], [0, 27], [0, 27]]} /></IconButton>
                <MiniSep $ml={5} />
                <IconButton $w={52} aria-label="Line spacing"><SpacingIcon /></IconButton>
                <Drop w={10} label="Spacing list" />
              </Row>
              <Row>
                <IconButton $w={38} aria-label="Shading"><BucketIcon /></IconButton>
                <Drop w={28} label="Shading colours" />
                <IconButton $w={50} aria-label="Borders"><BordersIcon /></IconButton>
                <Drop w={16} label="Border list" />
                <MiniSep $ml={14} />
                <IconButton $w={56} aria-label="Sort"><SortIcon /></IconButton>
                <MiniSep />
                <IconButton $w={56} aria-label="Show marks"><PilcrowIcon /></IconButton>
              </Row>
            </GroupBody>
            <GroupLabel $shift={32}>Paragraph</GroupLabel>
            <Launcher aria-label="Paragraph options"><LauncherIcon /></Launcher>
          </Group>
          <Separator />
          <Group $w={461}>
            <GalleryBody $pad={18}>
              <Gallery>
                <StyleCard $active><Sample>AaBbCcDc</Sample><StyleName>¶ Normal</StyleName></StyleCard>
                <StyleCard><Sample>AaBbCcDc</Sample><StyleName>¶ No Spac...</StyleName></StyleCard>
                <StyleCard><Sample $heading>AaBbCc</Sample><StyleName>Heading 1</StyleName></StyleCard>
                <GalleryScroll>
                  <ScrollStep $off aria-label="Previous styles"><Arrow dir="up" s={8} c="#bdbdbd" /></ScrollStep>
                  <ScrollStep aria-label="Next styles"><Arrow s={10} /></ScrollStep>
                  <ScrollStep aria-label="All styles"><svg width="12" height="12"><path d="M0 0h12v2H0zM1 5h10l-5 6z" fill="#808080" /></svg></ScrollStep>
                </GalleryScroll>
              </Gallery>
            </GalleryBody>
            <GroupLabel $shift={30}>Styles</GroupLabel>
            <Launcher aria-label="Style options"><LauncherIcon /></Launcher>
          </Group>
          <Separator />
          <Group $w={98}>
            <EditingButton><FindBox><SearchIcon /></FindBox><span>Editing</span><Chevron /></EditingButton>
          </Group>
          <Separator />
          <Collapse aria-label="Collapse the ribbon"><svg width="20" height="12"><path d="M2 11l8-8 8 8" fill="none" stroke="#8c8c8c" strokeWidth="2.600" /></svg></Collapse>
        </Ribbon>

        <Workspace>
          <Canvas>
            <RulerRow>
              <TabStop aria-label="Tab stop"><svg width="11" height="11"><path d="M2 0v9h9" fill="none" stroke="#666" strokeWidth="3.500" /></svg></TabStop>
              <Ruler>
                <FirstCell><Mark $long /></FirstCell>
                {ticks(-2.25, 83).map(v => <Cell key={v}><RulerMark v={v} /></Cell>)}
                <IndentMarker $side="left" width="17" height="42" viewBox="0 0 17 42">
                  <path d="M1 1h15v6l-7 8-8-8zM9 15l7 8v6H1v-6zM1 29h15v11H1z" fill="#fff" stroke="#a8a8a8" strokeWidth="2" />
                </IndentMarker>
                <IndentMarker $side="right" width="17" height="16" viewBox="0 0 17 16">
                  <path d="M8.500 1L16 8v6H1V8z" fill="#fff" stroke="#a8a8a8" strokeWidth="2" />
                </IndentMarker>
              </Ruler>
            </RulerRow>
            <DocRow>
              <VRulerTrack>
                <VRuler>{ticks(0.25, 16).map(v => <Cell key={v}><RulerMark v={v} /></Cell>)}</VRuler>
              </VRulerTrack>
              <DocColumn>
                <Pages>
                  <PageSheet $first><Paragraph>This is a page break MS word doc</Paragraph></PageSheet>
                  <PageSheet><Paragraph>This text will appear on the next page<Caret /></Paragraph></PageSheet>
                  <Callout>
                    This line is<br />a Page Break
                    <svg width="64" height="94" viewBox="0 0 64 94"><path d="M54 1L14 77" stroke="#e63c48" strokeWidth="5" /><path d="M6 91L4 68l10 5 12 8z" fill="#f5323c" /></svg>
                  </Callout>
                </Pages>
                <HScroll>
                  <ScrollButton aria-label="Scroll left"><Arrow dir="left" s={12} /></ScrollButton>
                  <HThumb />
                  <ScrollButton aria-label="Scroll right"><Arrow dir="right" s={12} /></ScrollButton>
                </HScroll>
              </DocColumn>
            </DocRow>
          </Canvas>
          <VScroll>
            <ScrollButton aria-label="Scroll up"><Arrow dir="up" s={12} /></ScrollButton>
            <VThumb />
            <ScrollButton aria-label="Scroll down"><Arrow s={12} /></ScrollButton>
          </VScroll>
        </Workspace>

        <StatusBar>
          <StatusItem $gap={35}>Page 2 of 2</StatusItem>
          <StatusItem $gap={34}>99 words</StatusItem>
          <StatusItem $gap={31}><ProofIcon /></StatusItem>
          <StatusItem $gap={0}>English (India)</StatusItem>
          <ViewButtons>
            <ViewButton aria-label="Read mode"><ReadIcon /></ViewButton>
            <ViewButton $active aria-label="Print layout"><PrintIcon /></ViewButton>
            <ViewButton aria-label="Web layout"><WebIcon /></ViewButton>
          </ViewButtons>
          <ZoomButton aria-label="Zoom out"><svg width="14" height="2"><path d="M0 0h14v2H0z" fill="#777" /></svg></ZoomButton>
          <ZoomSlider type="range" min="0" max="100" defaultValue="50" aria-label="Zoom" />
          <ZoomButton aria-label="Zoom in"><svg width="14" height="14"><path d="M0 6h14v2H0zM6 0h2v14H6z" fill="#777" /></svg></ZoomButton>
          <ZoomValue>100%</ZoomValue>
        </StatusBar>

        <Watermark aria-hidden>
          <WatermarkText $tone="red">FAST</WatermarkText>
          <WatermarkText $tone="blue">S</WatermarkText>
          <RocketIcon />
          <WatermarkText $tone="blue">FTWARES</WatermarkText>
        </Watermark>
      </AppWindow>
    </Desktop>
  );
}
